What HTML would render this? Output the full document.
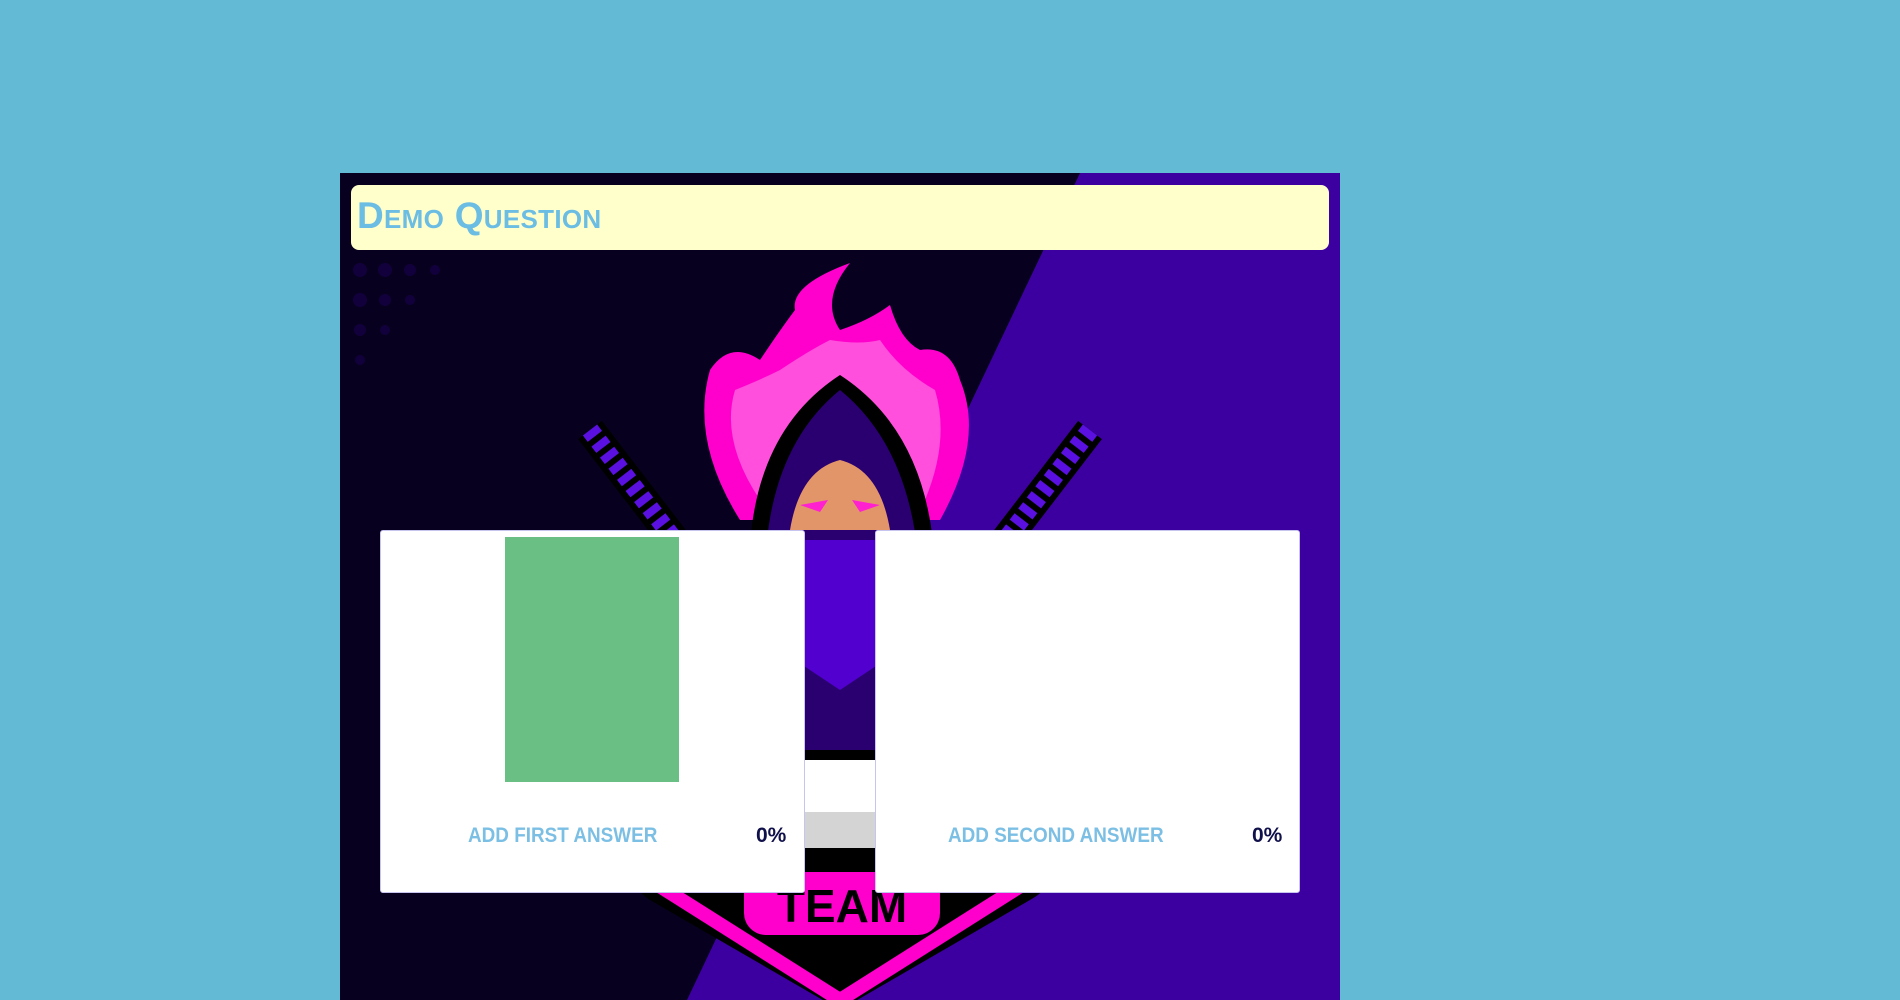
<!DOCTYPE html>
<html><head><meta charset="utf-8"><style>
html,body{margin:0;padding:0}
body{width:1900px;height:1000px;background:#62bad4;position:relative;overflow:hidden;font-family:"Liberation Sans",sans-serif}
#panel{position:absolute;left:340px;top:173px;width:1000px;height:827px;overflow:hidden;background:#07001f}
#hdr{position:absolute;left:351px;top:185px;width:978px;height:65px;background:#ffffcc;border-radius:8px}
#hdr span{position:absolute;left:6px;top:10px;font-size:37px;font-weight:bold;color:#6bbde3;font-variant:small-caps;letter-spacing:0.3px;transform:scaleX(1.0);transform-origin:left}
.card{position:absolute;top:530px;height:363px;background:#fff;border:1px solid #c8c4f0;border-radius:3px;box-sizing:border-box}
.lbl{position:absolute;top:824px;font-size:21px;font-weight:bold;color:#7cbfe4;letter-spacing:0px;transform:scaleX(0.9);transform-origin:left}
.pct{position:absolute;top:824px;font-size:21px;font-weight:bold;color:#10104a}
</style></head><body>
<div id="panel">
<svg width="1000" height="827" viewBox="340 173 1000 827" style="position:absolute;left:0;top:0">
<polygon points="1080,173 1340,173 1340,1000 687,1000" fill="#3d00a0"/>
<path d="M618,830 Q620,880 650,900 L840,1010 L1030,900 Q1066,880 1066,830 L1040,560 L640,560 Z" fill="#000"/>
<path d="M650,880 L840,1000 L1030,880" stroke="#ff00cc" stroke-width="14" fill="none"/>
<path d="M590,430 L690,560" stroke="#000" stroke-width="30"/>
<path d="M590,430 L690,560" stroke="#5a10e0" stroke-width="18" stroke-dasharray="8 6"/>
<path d="M1090,430 L990,560" stroke="#000" stroke-width="30"/>
<path d="M1090,430 L990,560" stroke="#5a10e0" stroke-width="18" stroke-dasharray="8 6"/>
<path d="M740,520 Q690,440 710,370 Q730,340 760,360 Q780,330 795,310 Q790,285 850,263 Q820,300 840,330 Q870,320 890,305 Q900,340 920,350 Q950,345 960,380 Q985,440 940,520 Z" fill="#ff00cc"/>
<path d="M760,500 Q720,440 735,390 Q760,380 780,370 Q810,350 830,340 Q860,345 880,340 Q900,370 935,390 Q950,440 925,500 Z" fill="#ff4fdc"/>
<path d="M750,600 Q740,440 840,375 Q940,440 935,600 L935,760 L750,760 Z" fill="#000"/>
<path d="M765,600 Q760,455 840,390 Q920,455 920,600 L920,750 L765,750 Z" fill="#2a0070"/>
<path d="M790,530 Q800,470 840,460 Q880,470 890,530 Z" fill="#e3956a"/>
<path d="M800,505 L828,500 L820,512 Z M880,505 L852,500 L860,512 Z" fill="#ff20d0"/>
<path d="M780,540 L900,540 L900,650 L840,690 L780,650 Z" fill="#5200d0"/>
<rect x="790" y="760" width="100" height="70" fill="#fff"/>
<rect x="790" y="812" width="100" height="36" fill="#d4d4d4"/>
<rect x="744" y="872" width="196" height="63" rx="22" fill="#ff00cc"/>
<text x="842" y="922" text-anchor="middle" font-family="Liberation Sans" font-weight="bold" font-size="46" fill="#000">TEAM</text>
<g fill="#1a0050" opacity="0.6">
<circle cx="360" cy="270" r="7"/><circle cx="385" cy="270" r="7"/><circle cx="410" cy="270" r="6"/><circle cx="435" cy="270" r="5"/>
<circle cx="360" cy="300" r="7"/><circle cx="385" cy="300" r="6"/><circle cx="410" cy="300" r="5"/>
<circle cx="360" cy="330" r="6"/><circle cx="385" cy="330" r="5"/><circle cx="360" cy="360" r="5"/>
</g>
</svg>
</div>
<div id="hdr"><span>Demo Question</span></div>
<div class="card" style="left:380px;width:425px"></div>
<div style="position:absolute;left:505px;top:537px;width:174px;height:245px;background:#6abf85"></div>
<div class="card" style="left:875px;width:425px"></div>
<div class="lbl" style="left:468px">ADD FIRST ANSWER</div>
<div class="pct" style="left:756px">0%</div>
<div class="lbl" style="left:948px">ADD SECOND ANSWER</div>
<div class="pct" style="left:1252px">0%</div>
</body></html>
